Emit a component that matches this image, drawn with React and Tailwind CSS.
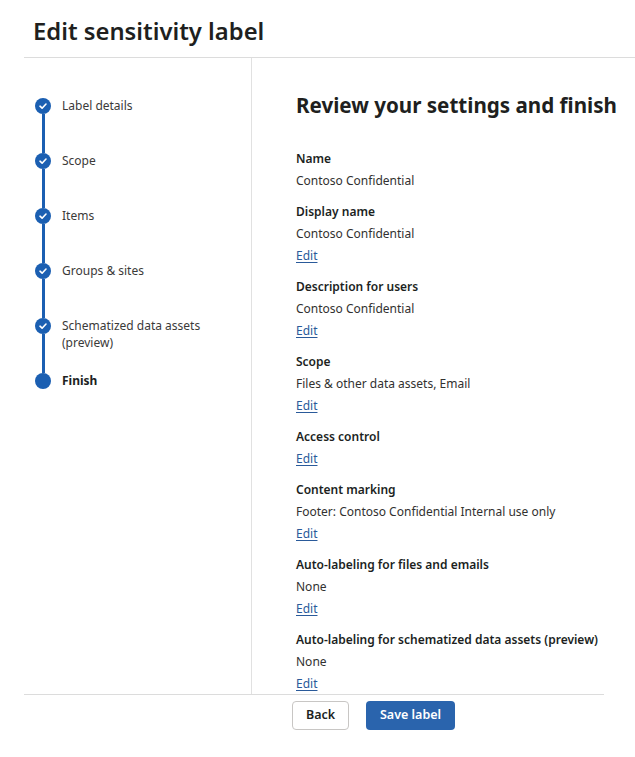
import React from "react";

const steps = [
  { label: "Label details", done: true },
  { label: "Scope", done: true },
  { label: "Items", done: true },
  { label: "Groups & sites", done: true },
  { label: "Schematized data assets", sub: "(preview)", done: true },
  { label: "Finish", current: true },
];

const sections = [
  { title: "Name", value: "Contoso Confidential", edit: false },
  { title: "Display name", value: "Contoso Confidential", edit: true },
  { title: "Description for users", value: "Contoso Confidential", edit: true },
  { title: "Scope", value: "Files & other data assets, Email", edit: true },
  { title: "Access control", edit: true },
  { title: "Content marking", value: "Footer: Contoso Confidential Internal use only", edit: true },
  { title: "Auto-labeling for files and emails", value: "None", edit: true },
  { title: "Auto-labeling for schematized data assets (preview)", value: "None", edit: true },
];

function StepDot({ current }) {
  if (current) {
    return <div className="w-[16px] h-[16px] rounded-full bg-[#1b5fb2]" />;
  }
  return (
    <div className="w-[16px] h-[16px] rounded-full bg-[#1b5fb2] flex items-center justify-center">
      <svg width="10" height="10" viewBox="0 0 10 10" fill="none">
        <path d="M2 5.2 L4.1 7.2 L8 3" stroke="white" strokeWidth="1.6" strokeLinecap="round" strokeLinejoin="round" />
      </svg>
    </div>
  );
}

export default function App() {
  return (
    <div className="w-[635px] h-[757px] bg-white overflow-hidden font-['Noto_Sans',sans-serif] text-[#323130]">
      <div className="h-[57px] pl-[33px] pt-[15px]">
        <h1 className="text-[23.8px] leading-[32px] font-semibold text-[#201f1e]">Edit sensitivity label</h1>
      </div>
      <div className="ml-[24px] border-t border-[#dcdcdc]" />

      <div className="flex h-[636px] ml-[24px]">
        {/* wizard steps */}
        <div className="w-[228px] shrink-0 border-r border-[#e1e1e1] pl-[11px] pt-[40px]">
          {steps.map((s, i) => {
            const last = i === steps.length - 1;
            return (
              <div key={s.label} className="flex h-[55px]">
                <div className="w-[16px] flex flex-col items-center">
                  <StepDot current={s.current} />
                  {!last && <div className="flex-1 w-[3px] bg-[#1b5fb2]" />}
                </div>
                <div className={`pl-[11px] text-[12px] leading-[17px] -mt-[1px] ${s.current ? "font-bold text-[#201f1e]" : "text-[#3b3a39]"}`}>
                  <div>{s.label}</div>
                  {s.sub && <div>{s.sub}</div>}
                </div>
              </div>
            );
          })}
        </div>

        {/* review panel */}
        <div className="flex-1 pl-[44px] pt-[33px] overflow-hidden">
          <h2 className="text-[20.6px] leading-[28px] font-bold text-[#201f1e] whitespace-nowrap">Review your settings and finish</h2>
          <div className="mt-[29px] flex flex-col gap-[9px]">
            {sections.map((s) => (
              <div key={s.title} className="text-[12px] leading-[22px]">
                <div className="font-semibold text-[#201f1e] whitespace-nowrap">{s.title}</div>
                {s.value && <div className="text-[#323130] whitespace-nowrap">{s.value}</div>}
                {s.edit && (
                  <div>
                    <a className="text-[#2a5a9a] underline underline-offset-2">Edit</a>
                  </div>
                )}
              </div>
            ))}
          </div>
        </div>
      </div>

      <div className="ml-[24px] w-[580px] border-t border-[#dcdcdc]" />
      <div className="flex gap-[17px] pl-[292px] pt-[6px]">
        <button className="h-[29px] w-[57px] rounded-[4px] border border-[#c8c6c4] bg-white text-[12.5px] font-semibold text-[#201f1e]">
          Back
        </button>
        <button className="h-[29px] w-[89px] rounded-[4px] bg-[#2a64ad] text-[12.5px] font-semibold text-white">
          Save label
        </button>
      </div>
    </div>
  );
}
